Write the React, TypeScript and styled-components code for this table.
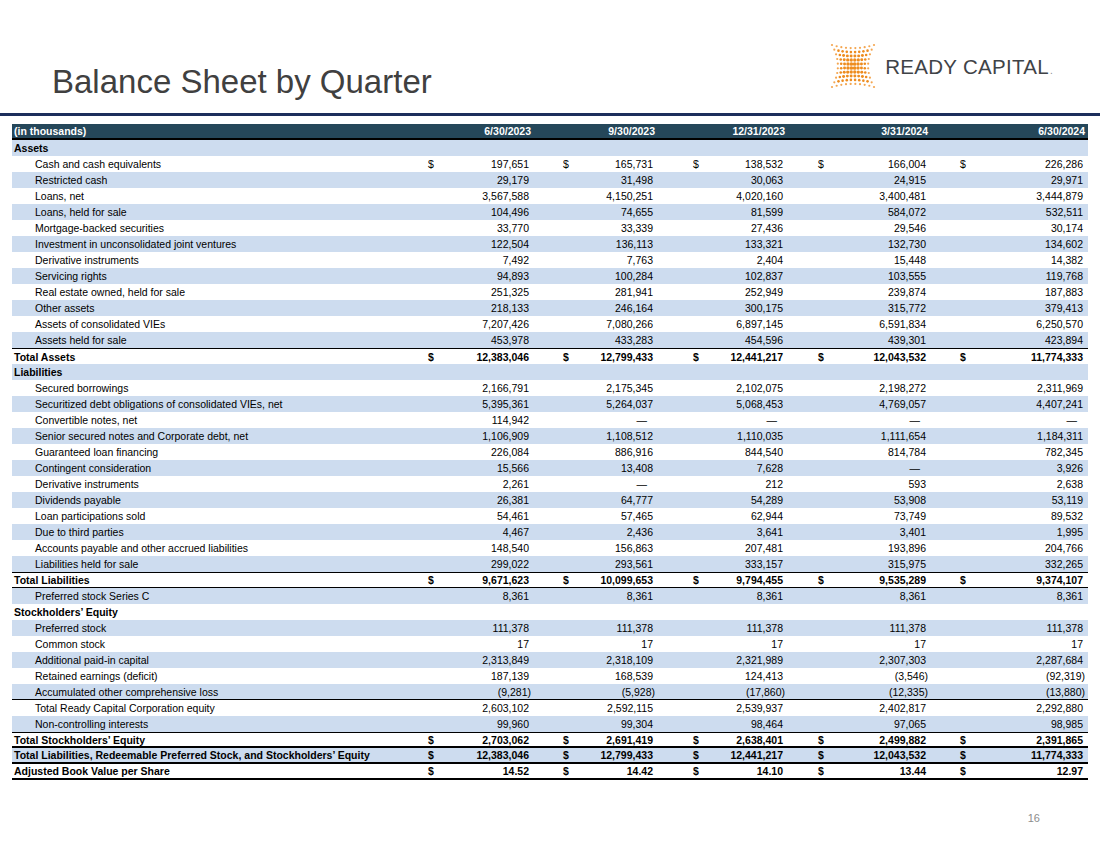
import React from 'react';
import styled, { createGlobalStyle } from 'styled-components';

const GlobalStyle = createGlobalStyle`
  html, body {
    margin: 0;
    padding: 0;
    background: #ffffff;
  }
  body {
    font-family: "Liberation Sans", Arial, sans-serif;
  }
`;

// label | Q1 | gap | Q2 | gap | Q3 | gap | Q4 | gap | Q5 | tail
const GRID = '416px 103px 32px 92px 38px 92px 33px 110px 32px 125px 3px';

const Page = styled.div`
  width: 1100px;
  height: 849px;
  display: flex;
  flex-direction: column;
  overflow: hidden;
`;

const Header = styled.header`
  height: 113px;
  display: flex;
  align-items: flex-start;
  justify-content: space-between;
  padding: 0 47px 0 52px;
`;

const Title = styled.h1`
  margin: 65px 0 0;
  font-size: 33px;
  line-height: 1;
  font-weight: 400;
  color: #404040;
`;

const Logo = styled.div`
  margin-top: 43px;
  display: flex;
  align-items: center;
  gap: 9px;
`;

const LogoText = styled.span`
  font-size: 20.5px;
  letter-spacing: 0.3px;
  color: #3f4347;
  line-height: 1;
  margin-top: 2px;
`;

const LogoDot = styled.span`
  font-size: 10px;
  color: #8a8d90;
  margin-left: 1px;
`;

const Rule = styled.div`
  height: 3px;
  background: #1d2f5c;
`;

const Table = styled.div`
  margin: 8px 12px 0;
  display: flex;
  flex-direction: column;
  font-size: 10.5px;
  color: #000;
`;

const Row = styled.div<{ $shade: boolean; $top?: number; $bottom?: number }>`
  display: grid;
  grid-template-columns: ${GRID};
  height: 16px;
  box-sizing: border-box;
  align-items: center;
  background: ${p => (p.$shade ? '#cddcef' : '#ffffff')};
  border-top: ${p => (p.$top ? `${p.$top}px solid #000` : 'none')};
  border-bottom: ${p => (p.$bottom ? `${p.$bottom}px solid #000` : 'none')};
`;

const HeadRow = styled.div`
  display: grid;
  grid-template-columns: ${GRID};
  height: 16px;
  box-sizing: border-box;
  align-items: center;
  background: #25475a;
  border-bottom: 2px solid #000;
  color: #ffffff;
  font-weight: 700;
`;

const Label = styled.div<{ $bold: boolean }>`
  grid-column: 1;
  padding-left: ${p => (p.$bold ? '2px' : '23px')};
  font-weight: ${p => (p.$bold ? 700 : 400)};
  white-space: nowrap;
`;

const Cell = styled.div<{ $i: number; $bold?: boolean }>`
  grid-column: ${p => 2 + p.$i * 2};
  display: flex;
  justify-content: space-between;
  font-weight: ${p => (p.$bold ? 700 : 400)};
  white-space: nowrap;
`;

const HeadCell = styled.div<{ $i: number }>`
  grid-column: ${p => 2 + p.$i * 2};
  text-align: right;
`;

const Num = styled.span<{ $kind: 'num' | 'neg' | 'dash' }>`
  margin-left: auto;
  padding-right: ${p => (p.$kind === 'num' ? '2px' : p.$kind === 'dash' ? '8px' : '0')};
`;

const Footer = styled.div`
  margin-top: auto;
  height: 37px;
  display: flex;
  justify-content: flex-end;
  padding-right: 60px;
  font-size: 11px;
  color: #8c8c8c;
`;

type Kind = 'section' | 'item' | 'total';

interface Line {
  label: string;
  kind: Kind;
  values?: string[];
  dollar?: boolean;
  top?: number;
  bottom?: number;
}

const QUARTERS = ['6/30/2023', '9/30/2023', '12/31/2023', '3/31/2024', '6/30/2024'];

const LINES: Line[] = [
  { label: 'Assets', kind: 'section' },
  { label: 'Cash and cash equivalents', kind: 'item', dollar: true, values: ['197,651', '165,731', '138,532', '166,004', '226,286'] },
  { label: 'Restricted cash', kind: 'item', values: ['29,179', '31,498', '30,063', '24,915', '29,971'] },
  { label: 'Loans, net', kind: 'item', values: ['3,567,588', '4,150,251', '4,020,160', '3,400,481', '3,444,879'] },
  { label: 'Loans, held for sale', kind: 'item', values: ['104,496', '74,655', '81,599', '584,072', '532,511'] },
  { label: 'Mortgage-backed securities', kind: 'item', values: ['33,770', '33,339', '27,436', '29,546', '30,174'] },
  { label: 'Investment in unconsolidated joint ventures', kind: 'item', values: ['122,504', '136,113', '133,321', '132,730', '134,602'] },
  { label: 'Derivative instruments', kind: 'item', values: ['7,492', '7,763', '2,404', '15,448', '14,382'] },
  { label: 'Servicing rights', kind: 'item', values: ['94,893', '100,284', '102,837', '103,555', '119,768'] },
  { label: 'Real estate owned, held for sale', kind: 'item', values: ['251,325', '281,941', '252,949', '239,874', '187,883'] },
  { label: 'Other assets', kind: 'item', values: ['218,133', '246,164', '300,175', '315,772', '379,413'] },
  { label: 'Assets of consolidated VIEs', kind: 'item', values: ['7,207,426', '7,080,266', '6,897,145', '6,591,834', '6,250,570'] },
  { label: 'Assets held for sale', kind: 'item', values: ['453,978', '433,283', '454,596', '439,301', '423,894'] },
  { label: 'Total Assets', kind: 'total', dollar: true, top: 1, values: ['12,383,046', '12,799,433', '12,441,217', '12,043,532', '11,774,333'] },
  { label: 'Liabilities', kind: 'section' },
  { label: 'Secured borrowings', kind: 'item', values: ['2,166,791', '2,175,345', '2,102,075', '2,198,272', '2,311,969'] },
  { label: 'Securitized debt obligations of consolidated VIEs, net', kind: 'item', values: ['5,395,361', '5,264,037', '5,068,453', '4,769,057', '4,407,241'] },
  { label: 'Convertible notes, net', kind: 'item', values: ['114,942', '—', '—', '—', '—'] },
  { label: 'Senior secured notes and Corporate debt, net', kind: 'item', values: ['1,106,909', '1,108,512', '1,110,035', '1,111,654', '1,184,311'] },
  { label: 'Guaranteed loan financing', kind: 'item', values: ['226,084', '886,916', '844,540', '814,784', '782,345'] },
  { label: 'Contingent consideration', kind: 'item', values: ['15,566', '13,408', '7,628', '—', '3,926'] },
  { label: 'Derivative instruments', kind: 'item', values: ['2,261', '—', '212', '593', '2,638'] },
  { label: 'Dividends payable', kind: 'item', values: ['26,381', '64,777', '54,289', '53,908', '53,119'] },
  { label: 'Loan participations sold', kind: 'item', values: ['54,461', '57,465', '62,944', '73,749', '89,532'] },
  { label: 'Due to third parties', kind: 'item', values: ['4,467', '2,436', '3,641', '3,401', '1,995'] },
  { label: 'Accounts payable and other accrued liabilities', kind: 'item', values: ['148,540', '156,863', '207,481', '193,896', '204,766'] },
  { label: 'Liabilities held for sale', kind: 'item', values: ['299,022', '293,561', '333,157', '315,975', '332,265'] },
  { label: 'Total Liabilities', kind: 'total', dollar: true, top: 1, bottom: 1, values: ['9,671,623', '10,099,653', '9,794,455', '9,535,289', '9,374,107'] },
  { label: 'Preferred stock Series C', kind: 'item', values: ['8,361', '8,361', '8,361', '8,361', '8,361'] },
  { label: 'Stockholders’ Equity', kind: 'section' },
  { label: 'Preferred stock', kind: 'item', values: ['111,378', '111,378', '111,378', '111,378', '111,378'] },
  { label: 'Common stock', kind: 'item', values: ['17', '17', '17', '17', '17'] },
  { label: 'Additional paid-in capital', kind: 'item', values: ['2,313,849', '2,318,109', '2,321,989', '2,307,303', '2,287,684'] },
  { label: 'Retained earnings (deficit)', kind: 'item', values: ['187,139', '168,539', '124,413', '(3,546)', '(92,319)'] },
  { label: 'Accumulated other comprehensive loss', kind: 'item', bottom: 1, values: ['(9,281)', '(5,928)', '(17,860)', '(12,335)', '(13,880)'] },
  { label: 'Total Ready Capital Corporation equity', kind: 'item', values: ['2,603,102', '2,592,115', '2,539,937', '2,402,817', '2,292,880'] },
  { label: 'Non-controlling interests', kind: 'item', values: ['99,960', '99,304', '98,464', '97,065', '98,985'] },
  { label: 'Total Stockholders’ Equity', kind: 'total', dollar: true, top: 1, bottom: 2, values: ['2,703,062', '2,691,419', '2,638,401', '2,499,882', '2,391,865'] },
  { label: 'Total Liabilities, Redeemable Preferred Stock, and Stockholders’ Equity', kind: 'total', dollar: true, bottom: 2, values: ['12,383,046', '12,799,433', '12,441,217', '12,043,532', '11,774,333'] },
  { label: 'Adjusted Book Value per Share', kind: 'total', dollar: true, bottom: 2, values: ['14.52', '14.42', '14.10', '13.44', '12.97'] },
];

const numKind = (v: string): 'num' | 'neg' | 'dash' =>
  v === '—' ? 'dash' : v.startsWith('(') ? 'neg' : 'num';

// pincushion grid of orange dots
const LogoMark = () => {
  const dots: React.ReactNode[] = [];
  const n = 10;
  for (let r = 0; r < n; r++) {
    for (let c = 0; c < n; c++) {
      const u = (c - (n - 1) / 2) / ((n - 1) / 2);
      const v = (r - (n - 1) / 2) / ((n - 1) / 2);
      const x = 23 + u * 21 * (0.72 + 0.28 * v * v);
      const y = 23 + v * 21 * (0.85 + 0.15 * u * u);
      const edge = Math.max(Math.abs(u), Math.abs(v));
      const rad = 1.95 - 0.85 * edge;
      const fill = edge > 0.8 ? '#f4a650' : '#ee8c1e';
      dots.push(<circle key={`${r}-${c}`} cx={x} cy={y} r={rad} fill={fill} />);
    }
  }
  return (
    <svg width="46" height="46" viewBox="0 0 46 46">
      {dots}
    </svg>
  );
};

const App = () => {
  return (
    <Page>
      <GlobalStyle />
      <Header>
        <Title>Balance Sheet by Quarter</Title>
        <Logo>
          <LogoMark />
          <LogoText>
            READY CAPITAL<LogoDot>.</LogoDot>
          </LogoText>
        </Logo>
      </Header>
      <Rule />
      <Table>
        <HeadRow>
          <Label $bold>(in thousands)</Label>
          {QUARTERS.map((q, i) => (
            <HeadCell key={q} $i={i}>{q}</HeadCell>
          ))}
        </HeadRow>
        {LINES.map((line, idx) => {
          const bold = line.kind !== 'item';
          return (
            <Row key={idx} $shade={idx % 2 === 0} $top={line.top} $bottom={line.bottom}>
              <Label $bold={bold}>{line.label}</Label>
              {line.values?.map((v, i) => (
                <Cell key={i} $i={i} $bold={line.kind === 'total'}>
                  {line.dollar && <span>$</span>}
                  <Num $kind={numKind(v)}>{v}</Num>
                </Cell>
              ))}
            </Row>
          );
        })}
      </Table>
      <Footer>16</Footer>
    </Page>
  );
};

export default App;
